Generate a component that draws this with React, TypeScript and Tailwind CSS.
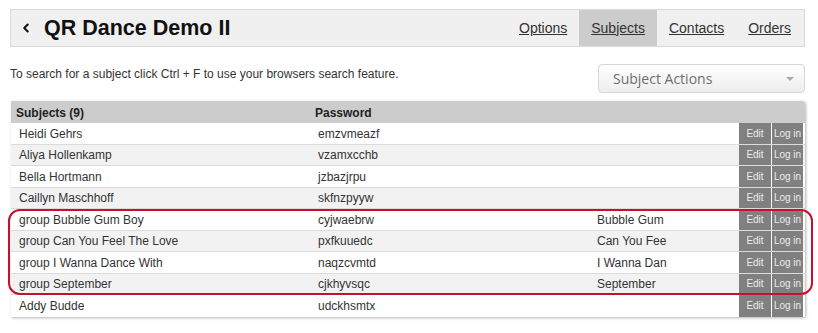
import { ChevronLeft } from "lucide-react";

type Subject = {
  name: string;
  password: string;
  group?: string;
};

const subjects: Subject[] = [
  { name: "Heidi Gehrs", password: "emzvmeazf" },
  { name: "Aliya Hollenkamp", password: "vzamxcchb" },
  { name: "Bella Hortmann", password: "jzbazjrpu" },
  { name: "Caillyn Maschhoff", password: "skfnzpyyw" },
  { name: "group Bubble Gum Boy", password: "cyjwaebrw", group: "Bubble Gum" },
  { name: "group Can You Feel The Love", password: "pxfkuuedc", group: "Can You Fee" },
  { name: "group I Wanna Dance With", password: "naqzcvmtd", group: "I Wanna Dan" },
  { name: "group September", password: "cjkhyvsqc", group: "September" },
  { name: "Addy Budde", password: "udckhsmtx" },
];

const tabs = ["Options", "Subjects", "Contacts", "Orders"];

const SubjectRow = ({ subject, index }: { subject: Subject; index: number }) => (
  <div
    className={`flex h-[21.5px] items-stretch border-b border-[#dcdcdc] last:border-b-0 ${
      index % 2 === 1 ? "bg-[#f2f2f2]" : "bg-white"
    }`}
  >
    <div className="w-[304px] pl-[8px] pt-[1px] flex items-center">{subject.name}</div>
    <div className="w-[279px] pl-[3px] pt-[1px] flex items-center">{subject.password}</div>
    <div className="flex-1 pl-[3px] pt-[1px] flex items-center">{subject.group}</div>
    <div className="flex gap-[1px] pr-[2px]">
      <button className="w-[32px] bg-[#808080] text-[#ececec] text-[10px] flex items-center justify-center">
        Edit
      </button>
      <button className="w-[31px] bg-[#808080] text-[#ececec] text-[10px] flex items-center justify-center">
        Log in
      </button>
    </div>
  </div>
);

export default function App() {
  return (
    <div className="relative w-[818px] h-[333px] bg-white text-[#333] font-['Liberation_Sans',Arial,sans-serif] overflow-hidden">
      <div className="ml-[10px] mt-[9px] w-[795px] h-[38px] flex items-center justify-between bg-[#f0f0f0] border border-[#dadada]">
        <div className="flex items-center">
          <ChevronLeft size={14} strokeWidth={3.5} className="ml-[8px] text-[#111]" />
          <h1 className="ml-[11px] text-[21.5px] font-bold text-[#111]">QR Dance Demo II</h1>
        </div>
        <nav className="flex h-full pr-[1px]">
          {tabs.map((tab) => (
            <a
              key={tab}
              href="#"
              className={`px-[12px] flex items-center text-[14px] underline text-[#333] ${
                tab === "Subjects" ? "bg-[#cccccc]" : ""
              }`}
            >
              {tab}
            </a>
          ))}
        </nav>
      </div>

      <div className="mt-[17px] ml-[10px] w-[795px] flex justify-between">
        <p className="mt-[1px] text-[12px]">
          To search for a subject click Ctrl + F to use your browsers search feature.
        </p>
        <div className="w-[207px] h-[29px] flex items-center justify-between pl-[14px] pr-[10px] rounded-[4px] border border-[#d6d6d6] bg-gradient-to-b from-white to-[#ededed] font-['Open_Sans',sans-serif] text-[14px] text-[#6e6e6e]">
          <span>Subject Actions</span>
          <span className="w-0 h-0 border-l-[4px] border-r-[4px] border-t-[4px] border-l-transparent border-r-transparent border-t-[#aaa]" />
        </div>
      </div>

      <div className="mt-[8px] ml-[11px] w-[794px] text-[12px] shadow-[1px_1px_3px_rgba(0,0,0,0.3)] rounded-tr-[3px]">
        <div className="flex h-[22px] items-center pt-[1px] bg-[#cccccc] font-bold text-[#222] rounded-tr-[3px]">
          <div className="w-[304px] pl-[5px]">Subjects (9)</div>
          <div>Password</div>
        </div>
        {subjects.map((subject, i) => (
          <SubjectRow key={subject.name} subject={subject} index={i} />
        ))}
      </div>

      <div className="absolute left-[8px] top-[209px] w-[805px] h-[86px] border-2 border-[#c8102e] rounded-[12px] pointer-events-none" />
    </div>
  );
}
